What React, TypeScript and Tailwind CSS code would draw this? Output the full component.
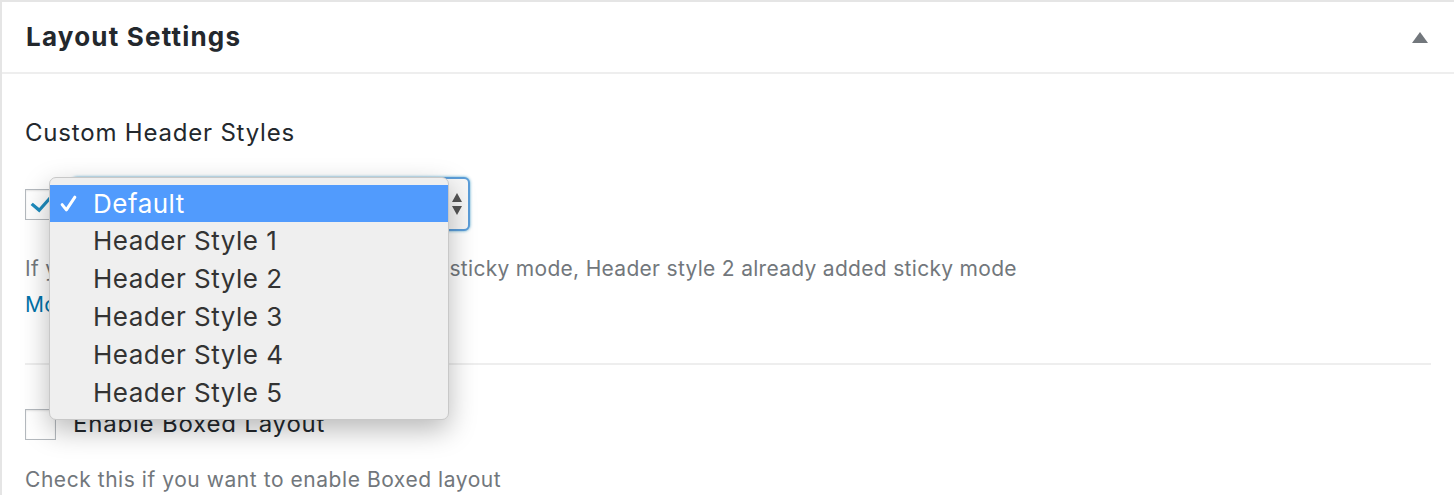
import React from 'react';

const headerStyles = ['Header Style 1', 'Header Style 2', 'Header Style 3', 'Header Style 4', 'Header Style 5'];

const CheckIcon: React.FC<{ className?: string }> = ({ className }) => (
  <svg viewBox="0 0 20 20" className={className} fill="currentColor">
    <path d="M16.2 4.4l1.9 1.6-9.4 10.6L2 10.8l1.7-1.8 4.9 4.1z" />
  </svg>
);

const Checkbox: React.FC<{ checked?: boolean }> = ({ checked = false }) => (
  <div className="w-[31px] h-[31px] border border-[#b4b9be] bg-white shadow-[inset_0_1px_2px_rgba(0,0,0,0.1)] flex items-center justify-center shrink-0">
    {checked && <CheckIcon className="w-[26px] h-[26px] text-[#1e8cbe]" />}
  </div>
);

const SelectMenu: React.FC = () => (
  <div className="absolute left-[24px] top-0 w-[400px] py-[7px] rounded-[7px] bg-[#efefef] border border-[#c8c8c8] shadow-[0_10px_28px_rgba(0,0,0,0.28)]">
    <div className="h-[37px] flex items-center bg-[#519bfd] text-white">
      <span className="w-[43px] pl-[10px] flex items-center">
        <svg viewBox="0 0 16 16" className="w-[17px] h-[17px]" fill="none" stroke="currentColor" strokeWidth="2.8" strokeLinecap="round" strokeLinejoin="round">
          <path d="M2 9l4 5 8-12" />
        </svg>
      </span>
      <span className="text-[26px] tracking-[0.5px]">Default</span>
    </div>
    {headerStyles.map(label => (
      <div key={label} className="h-[38px] flex items-center text-[#333]">
        <span className="w-[43px]" />
        <span className="text-[26px] tracking-[0.5px] -mt-[1px]">{label}</span>
      </div>
    ))}
  </div>
);

export default function App() {
  return (
    <div className="w-[1454px] h-[495px] overflow-hidden bg-white border-t-2 border-l-2 border-[#e5e5e5] font-['Inter',sans-serif]">
      <div className="h-[72px] flex items-center justify-between pl-[24px] pr-[26px] border-b-2 border-[#eeeeee]">
        <h2 className="text-[26px] font-bold text-[#23282d] tracking-[1.2px] -mt-[1px]">Layout Settings</h2>
        <svg viewBox="0 0 16 11" className="w-[16px] h-[11px] text-[#72777c]" fill="currentColor">
          <path d="M8 0l8 11H0z" />
        </svg>
      </div>

      <div className="pl-[23px] pr-[21px] pt-[43px]">
        <div className="h-[32px] flex items-center text-[24px] tracking-[0.8px] text-[#23282d]">Custom Header Styles</div>

        <div className="relative mt-[28px] h-[54px] flex items-center gap-[15px]">
          <Checkbox checked />
          <div className="w-[399px] h-[54px] rounded-[6px] border-2 border-[#5b9dd9] shadow-[0_0_3px_rgba(30,140,190,0.8)] bg-[#f7f7f7] flex items-center justify-end pr-[6px]">
            <svg viewBox="0 0 10 24" className="w-[10px] h-[24px] text-[#555]" fill="currentColor">
              <path d="M5 1l5 9H0zM5 23l5-9H0z" />
            </svg>
          </div>
          <SelectMenu />
        </div>

        <p className="mt-[20px] text-[21px] tracking-[0.3px] leading-[36px] text-[#72777c]">
          If you choose Header style 1, we can use sticky mode, Header style 2 already added sticky mode
        </p>
        <a className="block text-[21px] tracking-[0.3px] leading-[36px] text-[#0073aa]">More info</a>

        <div className="mt-[40px] mr-[2px] h-[2px] bg-[#eeeeee]" />

        <div className="mt-[43px] h-[32px] flex items-center gap-[17px]">
          <Checkbox />
          <span className="text-[24px] tracking-[0.8px] text-[#23282d]">Enable Boxed Layout</span>
        </div>

        <p className="mt-[26px] text-[21px] tracking-[0.55px] leading-[28px] text-[#72777c]">Check this if you want to enable Boxed layout</p>
      </div>
    </div>
  );
}
